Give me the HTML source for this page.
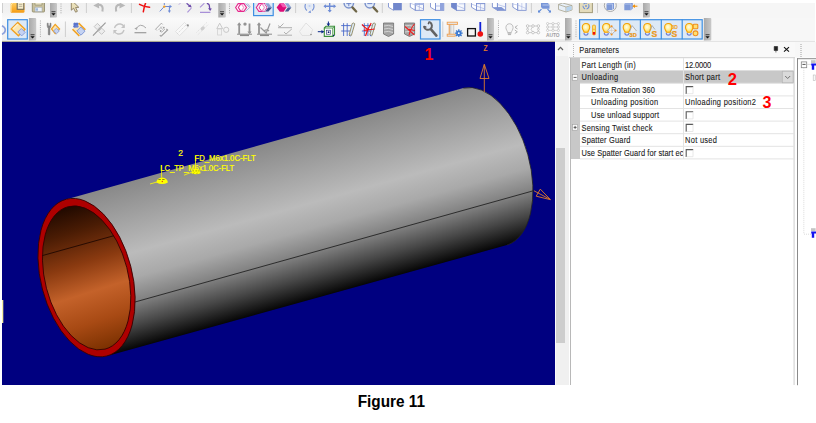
<!DOCTYPE html>
<html><head><meta charset="utf-8">
<style>
html,body{margin:0;padding:0;}
body{width:816px;height:423px;position:relative;overflow:hidden;background:#fff;font-family:"Liberation Sans",sans-serif;}
svg{position:absolute;left:0;top:0;}
text{font-family:"Liberation Sans",sans-serif;}
</style></head><body>
<svg width="816" height="423" viewBox="0 0 816 423">

<rect x="0" y="0" width="816" height="3" fill="#ffffff"/>
<defs><linearGradient id="rb1" x1="0" y1="0" x2="0" y2="1"><stop offset="0" stop-color="#f0f0f0"/><stop offset="0.6" stop-color="#f2f2f2"/><stop offset="1" stop-color="#f8f8f8"/></linearGradient><linearGradient id="rb2" x1="0" y1="0" x2="0" y2="1"><stop offset="0" stop-color="#fafafa"/><stop offset="1" stop-color="#efefef"/></linearGradient></defs>
<rect x="0" y="3" width="816" height="15" fill="#f6f6f6"/>
<rect x="2" y="3" width="648" height="15" fill="url(#rb1)"/>
<rect x="0" y="18" width="816" height="23" fill="#f7f7f7"/>
<rect x="2" y="18" width="709" height="22" fill="url(#rb2)"/>
<rect x="0" y="39.8" width="816" height="1" fill="#fbfbfb"/>
<rect x="0" y="40.8" width="555" height="1.2" fill="#aaa692"/>
<rect x="555" y="40.8" width="261" height="1.2" fill="#e4e4e4"/>
<rect x="0" y="0" width="2" height="42" fill="#ffffff"/>
<rect x="815" y="0" width="1" height="42" fill="#ffffff"/>
<defs>
<linearGradient id="grip" x1="0" y1="0" x2="1" y2="0"><stop offset="0" stop-color="#a9a9a9"/><stop offset="1" stop-color="#c9c9c9"/></linearGradient>
<linearGradient id="fold" x1="0" y1="0" x2="0" y2="1"><stop offset="0" stop-color="#ffd36a"/><stop offset="1" stop-color="#f59a10"/></linearGradient>
<radialGradient id="bulbg" cx="0.45" cy="0.4" r="0.65"><stop offset="0" stop-color="#fffde8"/><stop offset="0.55" stop-color="#ffec90"/><stop offset="1" stop-color="#ffc830"/></radialGradient>
<clipPath id="r1"><rect x="0" y="3" width="816" height="15"/></clipPath>
</defs>
<g clip-path="url(#r1)">
<rect x="2.0" y="3" width="1" height="10" fill="#cfcfcf"/>
<path d="M10.5 4 L12 2 H24.5 V11.5 Q24.5 12.8 23.2 12.8 H11.8 Q10.5 12.8 10.5 11.5 Z" fill="url(#fold)"/>
<rect x="17.2" y="1" width="6.6" height="8.3" fill="#f8eecb" stroke="#6f6a58" stroke-width="1.1"/>
<path d="M18.8 4.3 H22.3 M18.8 6.3 H22.3" stroke="#9a927a" stroke-width="0.7"/>
<path d="M11 12 V5 L12.5 3.2" fill="none" stroke="#ffe9b0" stroke-width="1"/>
<rect x="32.3" y="1" width="12.2" height="11" rx="0.8" fill="#c8c09c" stroke="#8c8668" stroke-width="0.8"/>
<rect x="35" y="7.2" width="7" height="4.3" fill="#eef3f8" stroke="#9aa0a8" stroke-width="0.5"/>
<rect x="35.6" y="8.3" width="2.4" height="2.4" fill="#9db8dc"/>
<path d="M35 1 V5 H42 V1" fill="#e8e2c8" stroke="#8c8668" stroke-width="0.6"/>
<path d="M50 3 H56 Q57 3 57 4 V16.5 Q57 17.5 56 17.5 H50 Z" fill="url(#grip)"/>
<rect x="51.5" y="11.3" width="4" height="0.9" fill="#303030"/>
<path d="M51.3 13.2 h4.4 l-2.2 2.4 z" fill="#111"/>
<rect x="60.5" y="3.5" width="1" height="1" fill="#a8a8a8"/>
<rect x="60.5" y="5.7" width="1" height="1" fill="#a8a8a8"/>
<rect x="60.5" y="7.9" width="1" height="1" fill="#a8a8a8"/>
<rect x="60.5" y="10.100000000000001" width="1" height="1" fill="#a8a8a8"/>
<rect x="60.5" y="12.3" width="1" height="1" fill="#a8a8a8"/>
<path d="M71.3 0 V10.2 L73.6 8.2 L75.6 12.2 L77.4 11.3 L75.6 7.5 L78.8 7.3 Z" fill="#e9dfb8" stroke="#7d7050" stroke-width="0.8"/>
<rect x="85.9" y="3" width="1" height="10" fill="#cfcfcf"/>
<path d="M102.4 11.6 Q104 4.6 98.2 4.6" fill="none" stroke="#b8b8b8" stroke-width="2.1"/><path d="M93.3 5.6 L98.8 2.6 L99.2 8.4 Z" fill="#b8b8b8"/>
<path d="M116.2 11.6 Q114.6 4.6 120.4 4.6" fill="none" stroke="#b8b8b8" stroke-width="2.1"/><path d="M125.3 5.6 L119.8 2.6 L119.4 8.4 Z" fill="#b8b8b8"/>
<rect x="130.9" y="3" width="1" height="10" fill="#cfcfcf"/>
<path d="M139.5 4.3 Q144 6.8 149.6 7.2 M145.6 3 Q144 7 143.3 11.8" fill="none" stroke="#ee1111" stroke-width="1.5" stroke-linecap="round"/>
<path d="M159.8 11.4 L164 6.8 M164.3 6.5 H171 M169.4 6.8 V12.3 M164.3 3 V5" fill="none" stroke="#6d8ad6" stroke-width="1"/>
<path d="M172 6.5 L169.6 4.8 V8.2 Z M169.4 12.8 L167.8 10.5 H171 Z" fill="#6d8ad6"/><circle cx="164.3" cy="6.6" r="1.2" fill="#f4a020"/>
<path d="M179 4.5 L180.2 3.3" stroke="#a890d8" stroke-width="1"/>
<path d="M186.6 3.2 L190.6 6.8" stroke="#7050b0" stroke-width="1.2"/><path d="M191.8 7.4 L187.8 6.6 L190.3 4.4 Z" fill="#6a48a8"/>
<path d="M191.4 8 L187.4 12.4" stroke="#a890d8" stroke-width="1.1"/>
<path d="M200 7.3 L204.4 3.2 M200 12.4 H210.4" fill="none" stroke="#a890d8" stroke-width="1.1"/>
<path d="M206.8 3.4 Q208.6 3.6 209.2 5 L209.8 9" fill="none" stroke="#6a48a8" stroke-width="1.3"/><path d="M210.2 11 L208 8.2 L211.8 8.4 Z" fill="#6a48a8"/>
<path d="M218.3 3 H224.8 Q225.8 3 225.8 4 V16.5 Q225.8 17.5 224.8 17.5 H218.3 Z" fill="url(#grip)"/>
<rect x="220.05" y="11.3" width="4" height="0.9" fill="#303030"/>
<path d="M219.85000000000002 13.2 h4.4 l-2.2 2.4 z" fill="#111"/>
<rect x="229.0" y="3.5" width="1" height="1" fill="#a8a8a8"/>
<rect x="229.0" y="5.7" width="1" height="1" fill="#a8a8a8"/>
<rect x="229.0" y="7.9" width="1" height="1" fill="#a8a8a8"/>
<rect x="229.0" y="10.100000000000001" width="1" height="1" fill="#a8a8a8"/>
<rect x="229.0" y="12.3" width="1" height="1" fill="#a8a8a8"/>
<path d="M235.6 7.5 L238.2 3.6 L241.2 3.6 L243.8 7.5 L241.2 11.4 L238.2 11.4 Z" fill="#ffffff" stroke="#e5288c" stroke-width="1.1"/>
<path d="M238.3 7.5 L240.9 3.6 L243.9 3.6 L246.5 7.5 L243.9 11.4 L240.9 11.4 Z" fill="#ffffff" fill-opacity="0.55" stroke="#e5288c" stroke-width="1.1"/>
<path d="M245.4 3.5 L249.6 7.5 L245.4 11.5 M247.3 3.5 L250.6 7.2" fill="none" stroke="#8ea4d8" stroke-width="0.8"/>
<rect x="253.6" y="0" width="19.6" height="15.6" fill="#dde9f6" stroke="#3d8fe3" stroke-width="1.2"/>
<path d="M256.3 7.5 L258.9 3.6 L261.9 3.6 L264.5 7.5 L261.9 11.4 L258.9 11.4 Z" fill="#ffffff" fill-opacity="0.8" stroke="#e5288c" stroke-width="1.1"/>
<path d="M259 7.5 L261.6 3.6 L264.6 3.6 L267.2 7.5 L264.6 11.4 L261.6 11.4 Z" fill="#ffffff" fill-opacity="0.5" stroke="#e5288c" stroke-width="1.1" stroke-dasharray="1.2 0.6"/>
<path d="M265.2 3.3 L268.5 3.3 L272 7.4 L268.2 7.4 Z" fill="#8ea4d6"/><path d="M268.2 7.4 L272 7.4 L268.5 11.6 L265.2 11.6 Z" fill="#3e4f88"/>
<path d="M276.6 7.5 L279.8 3.3 L283.8 3.3 L286.6 7.2 L283.6 11.7 L279.8 11.7 Z" fill="#dc0c78"/>
<path d="M279.8 3.3 L283.8 3.3 L286.6 7.2 L282.8 7.2 Z" fill="#f45cb4"/>
<path d="M284.8 3.3 L288.3 3.3 L291.4 7.4 L287.8 7.4 Z" fill="#90a6d8"/><path d="M287.8 7.4 L291.4 7.4 L288.3 11.6 L284.8 11.6 Z" fill="#46588e"/>
<rect x="295.1" y="3" width="1" height="10" fill="#cfcfcf"/>
<path d="M305.5 4 Q304 8 307 10.5 M313.5 4 Q315 8 312 10.5" fill="none" stroke="#7a96d8" stroke-width="1.2"/><circle cx="309.5" cy="6" r="1" fill="#7a96d8"/><path d="M308 12.5 L310.5 10.2 L311 13 Z" fill="#7a96d8"/><circle cx="309.5" cy="6.5" r="3" fill="#dbe6f8" fill-opacity="0.7"/>
<path d="M324.5 6.2 H335 M329.7 3 V11.5" stroke="#6f8dd6" stroke-width="1.4"/><path d="M323.4 6.2 L326 4.2 V8.2 Z M336.2 6.2 L333.6 4.2 V8.2 Z M329.7 12.5 L327.6 10 H331.8 Z" fill="#6f8dd6"/>
<circle cx="348.8" cy="3.2" r="4.7" fill="#e2ebf9" stroke="#7d93cb" stroke-width="1.5"/>
<path d="M352.4 7.4 L356.2 11.5" stroke="#6e6648" stroke-width="2.3" stroke-linecap="round"/>
<path d="M346.3 3.6 H351.3" stroke="#6f86c8" stroke-width="1"/>
<path d="M348.8 1 V6.2" stroke="#6f86c8" stroke-width="1"/>
<circle cx="369.8" cy="3.2" r="4.7" fill="#e2ebf9" stroke="#7d93cb" stroke-width="1.5"/>
<path d="M373.4 7.4 L377.2 11.5" stroke="#6e6648" stroke-width="2.3" stroke-linecap="round"/>
<path d="M367.3 3.6 H372.3" stroke="#6f86c8" stroke-width="1"/>
<rect x="381.8" y="3" width="1" height="10" fill="#cfcfcf"/>
<g transform="translate(388,0)">
<path d="M0.5 0 V7.2 L5.5 10.3 V0 Z" fill="#ffffff" stroke="#7187cc" stroke-width="0.8"/>
<rect x="5.5" y="0" width="8.3" height="10.3" fill="#7187cc"/>
</g>
<g transform="translate(409.8,0)">
<path d="M0.5 0 V7.2 L5.5 10.3 V0 Z" fill="#ffffff" stroke="#7187cc" stroke-width="0.8"/>
<rect x="5.5" y="0" width="8.3" height="10.3" fill="#f6f8fd" stroke="#7187cc" stroke-width="0.8"/>
<rect x="5.5" y="3" width="8.3" height="2" fill="#a9b8e4"/><path d="M5.5 5 L13.8 9 M9.5 3 V10" stroke="#9aaade" stroke-width="0.6"/><path d="M0.5 3.2 L5.5 5" stroke="#9aaade" stroke-width="0.6"/>
</g>
<g transform="translate(430,0)">
<path d="M0.5 0 V7.2 L5.5 10.3 V0 Z" fill="#ffffff" stroke="#7187cc" stroke-width="0.8"/>
<rect x="5.5" y="0" width="8.3" height="10.3" fill="#f6f8fd" stroke="#7187cc" stroke-width="0.8"/>
<rect x="10" y="0" width="3.8" height="10.3" fill="#90a3dc"/><path d="M5.5 6 H10" stroke="#9aaade" stroke-width="0.7"/>
</g>
<g transform="translate(451,0)">
<path d="M0.5 0 V7.2 L5.5 10.3 V0 Z" fill="#7187cc" stroke="#7187cc" stroke-width="0.8"/>
<rect x="5.5" y="0" width="8.3" height="10.3" fill="#f6f8fd" stroke="#7187cc" stroke-width="0.8"/>
<path d="M5.5 5.5 L13.8 8.8 M8 3.8 H13.8" stroke="#9aaade" stroke-width="0.6"/>
</g>
<g transform="translate(471,0)">
<path d="M0.5 0 V7.2 L5.5 10.3 V0 Z" fill="#ffffff" stroke="#7187cc" stroke-width="0.8"/>
<rect x="5.5" y="0" width="8.3" height="10.3" fill="#f6f8fd" stroke="#7187cc" stroke-width="0.8"/>
<path d="M5.5 3.6 H13.8" stroke="#7187cc" stroke-width="0.9"/><path d="M5.5 6 L13.8 9 M9.5 3.6 V10.3 M0.5 4 L5.5 6" stroke="#9aaade" stroke-width="0.6"/>
</g>
<g transform="translate(491.9,0)">
<path d="M0.5 0 V7.2 L5.5 10.3 V0 Z" fill="#ffffff" stroke="#7187cc" stroke-width="0.8"/>
<rect x="5.5" y="0" width="8.3" height="10.3" fill="#f6f8fd" stroke="#7187cc" stroke-width="0.8"/>
<path d="M0.5 7.2 L5.5 10.3 H13.8 L9.5 7 Z" fill="#8095d4"/><path d="M5.5 4.5 L13.8 7" stroke="#9aaade" stroke-width="0.6"/>
</g>
<g transform="translate(512.3,0)">
<path d="M0.5 0 V7.2 L5.5 10.3 V0 Z" fill="#ffffff" stroke="#7187cc" stroke-width="0.8"/>
<rect x="5.5" y="0" width="8.3" height="10.3" fill="#f6f8fd" stroke="#7187cc" stroke-width="0.8"/>
<path d="M5.5 5 L13.8 8.5 M9.5 3 V10.3 M0.5 4 L5.5 5" stroke="#a8b6e2" stroke-width="0.6"/>
</g>
<rect x="530.9" y="3" width="1" height="10" fill="#cfcfcf"/>
<path d="M541 3 H548 L549.5 5 V8.8 H542.5 L541 7 Z" fill="#7896d8"/><path d="M542.5 5 H549.5" stroke="#c8d6f2" stroke-width="0.8"/>
<path d="M541.5 9.2 L538.6 12 M547.5 9.2 L550.4 12" stroke="#5c88d8" stroke-width="1.1"/><path d="M538 12.6 L538.2 10 L540.6 12.4 Z M551 12.6 L550.8 10 L548.4 12.4 Z" fill="#5c88d8"/>
<path d="M558.5 4.5 L562.5 3 L572 5.5 L572 10 L566 12 L558.5 9.5 Z" fill="#e8f0f8" stroke="#a8a490" stroke-width="0.8"/><path d="M558.5 4.5 L566 7 L572 5.5 M566 7 V12" fill="none" stroke="#a8a490" stroke-width="0.8"/><path d="M566.5 7.3 L571.5 5.9 V9.8 L566.5 11.5 Z" fill="#b8d4ee"/>
<rect x="579.4" y="1" width="13" height="11.6" fill="#e4dcbc" stroke="#a49c7c" stroke-width="1"/><circle cx="586" cy="6" r="3" fill="none" stroke="#6f90d8" stroke-width="1.1" stroke-dasharray="4 1.5"/><circle cx="586" cy="6" r="0.9" fill="#6f90d8"/>
<rect x="597.0" y="3" width="1" height="10" fill="#cfcfcf"/>
<circle cx="610.3" cy="5.5" r="6" fill="none" stroke="#a0a0a0" stroke-width="0.9"/><path d="M606.5 4 L608 2.5 H614 V8.5 L612.5 10 H606.5 Z" fill="#7f9ad8"/><path d="M606.5 4 H612.5 V10" fill="none" stroke="#c8d6f2" stroke-width="0.7"/>
<path d="M624.3 4 L626 2.3 H632.8 V8.5 L631 10.2 H624.3 Z" fill="#7f9ad8"/><path d="M624.3 4 H631 V10.2" fill="none" stroke="#c8d6f2" stroke-width="0.7"/><path d="M633 6.2 H637.4" stroke="#f0900a" stroke-width="1.1"/><path d="M632.3 6.2 L635 4.3 V8.1 Z" fill="#f0900a"/>
<path d="M643 3 H649 Q650 3 650 4 V16.5 Q650 17.5 649 17.5 H643 Z" fill="url(#grip)"/>
<rect x="644.5" y="11.3" width="4" height="0.9" fill="#303030"/>
<path d="M644.3 13.2 h4.4 l-2.2 2.4 z" fill="#111"/>
</g>
<path d="M2 25.8 Q5.3 27.5 5.3 30 Q5.3 32.8 2 34.4" fill="none" stroke="#8ca0dc" stroke-width="1.6"/>
<rect x="7.699999999999999" y="19.700000000000003" width="19.599999999999998" height="19.3" fill="#dde9f6" stroke="#3d8fe3" stroke-width="1.2"/>
<path d="M11.2 29 L17.8 22.4 L25 29.2 L18.4 35.8 Z" fill="#fbe6b0" stroke="#f0a020" stroke-width="1.4"/>
<path d="M12.8 29 L17.8 24" stroke="#fff2d0" stroke-width="1.2"/>
<path d="M17.8 32 L21.3 28.5 L25.2 32.4 L21.7 35.9 Z" fill="#c4d2f2" stroke="#8199d8" stroke-width="0.9"/>
<path d="M28.9 18.1 H35.2 Q36.2 18.1 36.2 19.1 V39.5 Q36.2 40.5 35.2 40.5 H28.9 Z" fill="url(#grip)"/>
<rect x="30.549999999999997" y="34.3" width="4" height="0.9" fill="#303030"/>
<path d="M30.349999999999998 36.2 h4.4 l-2.2 2.4 z" fill="#111"/>
<rect x="39.9" y="20.5" width="1" height="1" fill="#a8a8a8"/>
<rect x="39.9" y="22.7" width="1" height="1" fill="#a8a8a8"/>
<rect x="39.9" y="24.9" width="1" height="1" fill="#a8a8a8"/>
<rect x="39.9" y="27.099999999999998" width="1" height="1" fill="#a8a8a8"/>
<rect x="39.9" y="29.299999999999997" width="1" height="1" fill="#a8a8a8"/>
<rect x="39.9" y="31.499999999999996" width="1" height="1" fill="#a8a8a8"/>
<rect x="39.9" y="33.699999999999996" width="1" height="1" fill="#a8a8a8"/>
<rect x="39.9" y="35.9" width="1" height="1" fill="#a8a8a8"/>
<path d="M47.2 23.2 V25.8 Q47.2 27.6 48.3 28.2 V34.6 Q49.1 35.6 49.9 34.6 V28.2 Q51 27.6 51 25.8 V23.2 L50 23.2 V25.6 Q49.1 26.4 48.2 25.6 V23.2 Z" fill="#868686" stroke="#707070" stroke-width="0.5"/>
<path d="M51.5 29 L55.2 24.4 L59.6 29 L55.2 33.6 Z" fill="#fbe6b0" stroke="#f0a020" stroke-width="1.2"/><path d="M53.5 31 L56.4 28.3 L59.3 31 L56.4 33.8 Z" fill="#c4d2f2" stroke="#8199d8" stroke-width="0.8"/>
<rect x="64.9" y="21.5" width="1" height="15.5" fill="#cfcfcf"/>
<path d="M72.5 29.2 L78.6 23 L85.4 29.8 L79.3 36 Z" fill="#fbe8bc"/>
<path d="M72.5 29.2 L79.3 36 M78.6 23 L85.4 29.8" stroke="#f0a020" stroke-width="1.5"/>
<path d="M76.8 31 L80.8 27 L85 31.2 L81 35.2 Z" fill="#c4d2f2" stroke="#7f98d8" stroke-width="1"/>
<circle cx="74.8" cy="24" r="1.5" fill="#5a74cc"/><circle cx="77" cy="24" r="1.5" fill="#5a74cc"/><circle cx="74.8" cy="26.2" r="1.5" fill="#5a74cc"/><circle cx="77" cy="26.2" r="1.5" fill="#6a84d4"/>
<path d="M93 35.6 L105.6 22.6" stroke="#9a9a9a" stroke-width="1.2"/><path d="M94.2 26.6 L97.4 23.4 L100.4 26.4 L97.2 29.6 Z M98.6 31.4 L101.8 28.2 L104.8 31.2 L101.6 34.4 Z" fill="#ededed" stroke="#c0c0c0" stroke-width="0.9"/>
<path d="M114.5 28 Q116 23.5 120.5 24 Q123 24.5 124 26.5 M124 30 Q122.5 34.5 118 34 Q115.5 33.5 114.5 31.5" fill="none" stroke="#c4c4c4" stroke-width="1.4"/><path d="M124.8 24 V28 H121 Z M113.4 34 V30 H117.2 Z" fill="#c4c4c4"/>
<path d="M136 29 Q140 22 146 28" fill="none" stroke="#a8a8a8" stroke-width="1"/><path d="M134.3 28.5 L137.5 27 L137 30 Z" fill="#a8a8a8"/><path d="M134.5 32.7 H146.3" stroke="#9a9a9a" stroke-width="1.2"/>
<path d="M155.6 29.2 L156.8 30.4 M155.6 29.2 L161.4 23.2 L162.6 24.4" fill="none" stroke="#a8a8a8" stroke-width="1"/>
<path d="M161 36.4 L159.8 35.2 M161 36.4 L167.6 30 L166.4 28.8" fill="none" stroke="#9c9c9c" stroke-width="1.1"/>
<path d="M158.5 30 L162 26.5 M161.5 32.5 L165 29 M160.3 27 L163.5 30.2" fill="none" stroke="#b4b4b4" stroke-width="0.9"/><circle cx="160.7" cy="31" r="0.9" fill="#a0a0a0"/><circle cx="163.8" cy="27.7" r="0.9" fill="#a0a0a0"/>
<path d="M175.5 31.5 L184.5 22.5 L188.6 26.6 L179.6 35.6 Z" fill="#f8f8f8" stroke="#dadada" stroke-width="0.7"/><path d="M177.5 33.5 L186.5 24.5" stroke="#c8c8c8" stroke-width="0.8" stroke-dasharray="1 1.2"/><circle cx="187.8" cy="25.4" r="1.1" fill="#8e8e8e"/>
<path d="M196.5 32.5 L207.5 21.8 M197.8 34.8 L208.8 24" fill="none" stroke="#d8d8d8" stroke-width="0.8" stroke-dasharray="1.2 1"/><ellipse cx="202.7" cy="28.4" rx="2.4" ry="1.7" transform="rotate(-45 202.7 28.4)" fill="#cfcfcf"/>
<path d="M216.8 28.6 L219.7 23.2 L222.6 28.6 Z" fill="none" stroke="#c4c4c4" stroke-width="0.9"/><rect x="217.6" y="29" width="4" height="6" fill="#f2f2f2" stroke="#d2d2d2" stroke-width="0.8"/><circle cx="226.2" cy="29.8" r="2.6" fill="none" stroke="#c4c4c4" stroke-width="0.9"/>
<path d="M239.2 24.5 V34.5 M249.5 23.5 V33" stroke="#949494" stroke-width="1.8"/><path d="M239.2 22.3 L237 25.2 H241.4 Z M249.5 34.3 L247.4 31.6 H251.6 Z" fill="#949494"/><circle cx="245" cy="24.1" r="1.7" fill="#949494"/><rect x="237" y="33.6" width="15" height="1.3" fill="#a4a4a4"/><rect x="240" y="34.6" width="9" height="1.5" fill="#8a8a8a"/>
<path d="M259 24.5 V34.5" stroke="#949494" stroke-width="1.8"/><path d="M259 22.3 L256.8 25.2 H261.2 Z" fill="#949494"/><rect x="257" y="33.6" width="15" height="1.3" fill="#a4a4a4"/><rect x="260" y="34.6" width="9" height="1.5" fill="#8a8a8a"/><path d="M260.5 27.5 L266.5 33.2 M270 23.5 L266 33.5 M264.5 30.5 Q267 29 269 31" fill="none" stroke="#9a9a9a" stroke-width="1.2"/>
<path d="M278 25.5 L280 27 L283.5 23.5 M284 32 L286 34 L291.8 29 M278 27.7 H292 M277.5 35.2 H292" fill="none" stroke="#a8a8a8" stroke-width="0.9"/>
<path d="M299.5 31.5 L306 23 L312.6 29.5 L310.5 35.5 L302 35.5 Z" fill="none" stroke="#dcdcdc" stroke-width="0.8"/><circle cx="311" cy="34.5" r="0.8" fill="#8a8a8a"/>
<path d="M324.3 28 L326 26.3 H334.5 V34.7 L332.8 36.4 H324.3 Z" fill="#ffffff" stroke="#3a8e3a" stroke-width="1.1"/>
<path d="M324.3 28 H332.8 V36.4 M332.8 28 L334.5 26.3" fill="none" stroke="#3a8e3a" stroke-width="0.9"/>
<rect x="326.6" y="30.2" width="4" height="4" fill="#fff" stroke="#1a2a6a" stroke-width="0.6"/><circle cx="328.6" cy="32.2" r="0.9" fill="#0c1e70"/><circle cx="333.6" cy="35.6" r="0.8" fill="#0c1e70"/>
<path d="M328.4 21.5 V25.6 M317.8 31.7 H323.6" stroke="#0c2a88" stroke-width="1"/><path d="M328.4 26.2 L326.6 23.4 H330.2 Z M324.3 31.7 L321.4 30 V33.4 Z" fill="#0c2a88"/>
<path d="M343.6 23.2 V36 M347.2 23.2 V36 M341.2 25.6 H350.8 M341.2 31 H350.8" stroke="#4868c8" stroke-width="0.9"/>
<path d="M349.2 34.8 L352.2 23.6 Q353.6 22.3 354.8 23.8 L351.4 35.4 Z" fill="#dcebf8" stroke="#8c8660" stroke-width="0.9"/>
<path d="M349.3 35 L350.3 36.3" stroke="#4868c8" stroke-width="1"/>
<path d="M364.3 23.2 V36 M367.9 23.2 V36 M361.9 25.6 H371.5 M361.9 31 H371.5" stroke="#4868c8" stroke-width="0.9"/>
<path d="M369.9 34.8 L372.9 23.6 Q374.3 22.3 375.5 23.8 L372.09999999999997 35.4 Z" fill="#dcebf8" stroke="#8c8660" stroke-width="0.9"/>
<path d="M370.0 35 L371.0 36.3" stroke="#4868c8" stroke-width="1"/>
<path d="M362.0 24.3 Q364.7 27.5 367.2 29 M371.2 23.2 Q367.7 28.5 365.5 36 M363.7 30.4 Q368.7 29.6 374.7 29" fill="none" stroke="#f01818" stroke-width="1.2"/>
<path d="M383.5 23 H393.6 V34 L388.5 36.5 L383.5 34 Z" fill="#a4a4a4" stroke="#707070" stroke-width="0.8"/>
<path d="M384 26 Q388.5 24.5 393 26.5 M384 29 Q388.5 27.5 393 29.5 M384 32 Q388.5 30.5 393 32.5" fill="none" stroke="#d8d8d8" stroke-width="0.9"/>
<path d="M404.5 23 H414.6 V34 L409.5 36.5 L404.5 34 Z" fill="#a4a4a4" stroke="#707070" stroke-width="0.8"/>
<path d="M405 26 Q409.5 24.5 414 26.5 M405 29 Q409.5 27.5 414 29.5 M405 32 Q409.5 30.5 414 32.5" fill="none" stroke="#d8d8d8" stroke-width="0.9"/>
<path d="M405 26.5 Q410 31 414.5 35 M414.5 24 Q410 29 409 35.5 M408 29 L415 30.5" fill="none" stroke="#ee2020" stroke-width="1.1"/>
<rect x="420.5" y="19.700000000000003" width="19.500000000000046" height="19.3" fill="#dde9f6" stroke="#3d8fe3" stroke-width="1.2"/>
<path d="M429.6 22.2 A4 4 0 1 1 424 26.6" fill="none" stroke="#626262" stroke-width="2"/>
<path d="M429.2 21.9 L428.4 23.6 M424 26.6 L425.8 27" stroke="#5a5a5a" stroke-width="1.5" stroke-linecap="round"/>
<path d="M431.2 29.6 L436.4 35.6" stroke="#626262" stroke-width="2.6" stroke-linecap="round"/>
<rect x="442.3" y="21.5" width="1" height="15.5" fill="#cfcfcf"/>
<rect x="449.2" y="23.6" width="4.6" height="11" fill="#cfcfcf"/><rect x="451.4" y="23.6" width="2.4" height="11" fill="#ececec"/>
<rect x="447.2" y="22.2" width="10.2" height="2.2" fill="#e6e6e6" stroke="#f0a050" stroke-width="0.9"/>
<rect x="447.2" y="34.2" width="8" height="2" fill="#e6e6e6" stroke="#f0a050" stroke-width="0.9"/>
<path d="M449.2 24.4 V34.2" stroke="#f0a050" stroke-width="1"/><path d="M453.8 24.4 V34.2" stroke="#b8b8b8" stroke-width="0.6"/>
<circle cx="458.8" cy="33.2" r="2.7" fill="#3a78d0"/><path d="M461.00 33.20 L462.70 33.20 M460.36 34.76 L461.56 35.96 M458.80 35.40 L458.80 37.10 M457.24 34.76 L456.04 35.96 M456.60 33.20 L454.90 33.20 M457.24 31.64 L456.04 30.44 M458.80 31.00 L458.80 29.30 M460.36 31.64 L461.56 30.44" stroke="#3a78d0" stroke-width="1.3"/><circle cx="458.8" cy="33.2" r="0.9" fill="#ffffff"/>
<rect x="467.6" y="28.6" width="7.8" height="7.4" fill="#f4f4f4" stroke="#111" stroke-width="1.3"/><rect x="479.4" y="22" width="1.8" height="10" fill="#1020d8"/><circle cx="480.3" cy="34" r="2.8" fill="#ee1111"/>
<path d="M487 18.1 H493 Q494 18.1 494 19.1 V39.5 Q494 40.5 493 40.5 H487 Z" fill="url(#grip)"/>
<rect x="488.5" y="34.3" width="4" height="0.9" fill="#303030"/>
<path d="M488.3 36.2 h4.4 l-2.2 2.4 z" fill="#111"/>
<rect x="498.0" y="20.5" width="1" height="1" fill="#a8a8a8"/>
<rect x="498.0" y="22.7" width="1" height="1" fill="#a8a8a8"/>
<rect x="498.0" y="24.9" width="1" height="1" fill="#a8a8a8"/>
<rect x="498.0" y="27.099999999999998" width="1" height="1" fill="#a8a8a8"/>
<rect x="498.0" y="29.299999999999997" width="1" height="1" fill="#a8a8a8"/>
<rect x="498.0" y="31.499999999999996" width="1" height="1" fill="#a8a8a8"/>
<rect x="498.0" y="33.699999999999996" width="1" height="1" fill="#a8a8a8"/>
<rect x="498.0" y="35.9" width="1" height="1" fill="#a8a8a8"/>
<rect x="498" y="18.4" width="67" height="21.8" fill="#fafafa"/><rect x="498" y="39.6" width="67.5" height="0.8" fill="#d8d8d8"/>
<rect x="498.0" y="20.5" width="1" height="1" fill="#a8a8a8"/>
<rect x="498.0" y="22.7" width="1" height="1" fill="#a8a8a8"/>
<rect x="498.0" y="24.9" width="1" height="1" fill="#a8a8a8"/>
<rect x="498.0" y="27.099999999999998" width="1" height="1" fill="#a8a8a8"/>
<rect x="498.0" y="29.299999999999997" width="1" height="1" fill="#a8a8a8"/>
<rect x="498.0" y="31.499999999999996" width="1" height="1" fill="#a8a8a8"/>
<rect x="498.0" y="33.699999999999996" width="1" height="1" fill="#a8a8a8"/>
<rect x="498.0" y="35.9" width="1" height="1" fill="#a8a8a8"/>
<g transform="translate(509.5,29)">
<path d="M-3.6 -1.5 C-3.6 -6.5 3.6 -6.5 3.6 -1.5 C3.6 0.8 2 2 1.8 3.6 H-1.8 C-2 2 -3.6 0.8 -3.6 -1.5 Z" fill="#f6f6f6" stroke="#b8b8b8" stroke-width="0.9"/>
<path d="M-1.9 4.2 H1.9 M-1.6 5.6 H1.6" stroke="#b0b0b0" stroke-width="1"/>
</g>
<path d="M517.5 25.5 L515 27.3 L517.5 29 M514.8 30 L517.3 31.8 L514.8 33.5" fill="none" stroke="#b0b0b0" stroke-width="1"/>
<path d="M527.6 26 V32.6 M538.4 26 V32.6 M527.6 26 H538.4 M527.6 32.6 H538.4 M533 26 L531 29.3 L533 32.6" fill="none" stroke="#c0c0c0" stroke-width="0.8"/>
<circle cx="527.6" cy="26" r="1.3" fill="#fdfdfd" stroke="#b4b4b4" stroke-width="0.7"/>
<circle cx="527.6" cy="32.6" r="1.3" fill="#fdfdfd" stroke="#b4b4b4" stroke-width="0.7"/>
<circle cx="533" cy="26" r="1.3" fill="#fdfdfd" stroke="#b4b4b4" stroke-width="0.7"/>
<circle cx="533" cy="32.6" r="1.3" fill="#fdfdfd" stroke="#b4b4b4" stroke-width="0.7"/>
<circle cx="538.4" cy="26" r="1.3" fill="#fdfdfd" stroke="#b4b4b4" stroke-width="0.7"/>
<circle cx="538.4" cy="32.6" r="1.3" fill="#fdfdfd" stroke="#b4b4b4" stroke-width="0.7"/>
<circle cx="527.6" cy="29.3" r="1" fill="#fdfdfd" stroke="#b4b4b4" stroke-width="0.6"/><circle cx="538.4" cy="29.3" r="1" fill="#fdfdfd" stroke="#b4b4b4" stroke-width="0.6"/>
<path d="M547.6 23.6 V30.4 M553 23.6 V30.4 M558.4 23.6 V30.4 M547.6 23.6 H558.4 M547.6 27 H558.4 M547.6 30.4 H558.4" fill="none" stroke="#c8c8c8" stroke-width="0.7"/>
<circle cx="547.6" cy="23.6" r="1.1" fill="#fdfdfd" stroke="#b8b8b8" stroke-width="0.6"/>
<circle cx="547.6" cy="27" r="1.1" fill="#fdfdfd" stroke="#b8b8b8" stroke-width="0.6"/>
<circle cx="547.6" cy="30.4" r="1.1" fill="#fdfdfd" stroke="#b8b8b8" stroke-width="0.6"/>
<circle cx="553" cy="23.6" r="1.1" fill="#fdfdfd" stroke="#b8b8b8" stroke-width="0.6"/>
<circle cx="553" cy="27" r="1.1" fill="#fdfdfd" stroke="#b8b8b8" stroke-width="0.6"/>
<circle cx="553" cy="30.4" r="1.1" fill="#fdfdfd" stroke="#b8b8b8" stroke-width="0.6"/>
<circle cx="558.4" cy="23.6" r="1.1" fill="#fdfdfd" stroke="#b8b8b8" stroke-width="0.6"/>
<circle cx="558.4" cy="27" r="1.1" fill="#fdfdfd" stroke="#b8b8b8" stroke-width="0.6"/>
<circle cx="558.4" cy="30.4" r="1.1" fill="#fdfdfd" stroke="#b8b8b8" stroke-width="0.6"/>
<text x="546" y="36.8" font-size="5" font-weight="bold" fill="#a0a0a0" textLength="13.6" lengthAdjust="spacingAndGlyphs">AUTO</text>
<path d="M565 18.1 H570.8 Q571.8 18.1 571.8 19.1 V39.5 Q571.8 40.5 570.8 40.5 H565 Z" fill="url(#grip)"/>
<rect x="566.4" y="34.3" width="4" height="0.9" fill="#303030"/>
<path d="M566.1999999999999 36.2 h4.4 l-2.2 2.4 z" fill="#111"/>
<rect x="575.5" y="20.5" width="1" height="1" fill="#a8a8a8"/>
<rect x="575.5" y="22.7" width="1" height="1" fill="#a8a8a8"/>
<rect x="575.5" y="24.9" width="1" height="1" fill="#a8a8a8"/>
<rect x="575.5" y="27.099999999999998" width="1" height="1" fill="#a8a8a8"/>
<rect x="575.5" y="29.299999999999997" width="1" height="1" fill="#a8a8a8"/>
<rect x="575.5" y="31.499999999999996" width="1" height="1" fill="#a8a8a8"/>
<rect x="575.5" y="33.699999999999996" width="1" height="1" fill="#a8a8a8"/>
<rect x="575.5" y="35.9" width="1" height="1" fill="#a8a8a8"/>
<rect x="579.6" y="19.7" width="122.59999999999994" height="19.3" fill="#dde9f6" stroke="#3d8fe3" stroke-width="1.2"/>
<rect x="598.6999999999999" y="19.3" width="1.2" height="20" fill="#3d8fe3"/>
<rect x="619.3" y="19.3" width="1.2" height="20" fill="#3d8fe3"/>
<rect x="639.8" y="19.3" width="1.2" height="20" fill="#3d8fe3"/>
<rect x="660.6999999999999" y="19.3" width="1.2" height="20" fill="#3d8fe3"/>
<rect x="681.6" y="19.3" width="1.2" height="20" fill="#3d8fe3"/>
<g transform="translate(586.0,28.9)">
<path d="M-3.7 -1.6 C-3.7 -6.6 3.7 -6.6 3.7 -1.6 C3.7 0.8 2.1 1.9 1.9 3.4 H-1.9 C-2.1 1.9 -3.7 0.8 -3.7 -1.6 Z" fill="url(#bulbg)" stroke="#f5a000" stroke-width="1.1"/>
<path d="M-2 4 Q-2 6.2 0 6.2 Q2 6.2 2 4" fill="none" stroke="#6f7fd4" stroke-width="1.1"/>
</g>
<g transform="translate(606.3,28.9)">
<path d="M-3.7 -1.6 C-3.7 -6.6 3.7 -6.6 3.7 -1.6 C3.7 0.8 2.1 1.9 1.9 3.4 H-1.9 C-2.1 1.9 -3.7 0.8 -3.7 -1.6 Z" fill="url(#bulbg)" stroke="#f5a000" stroke-width="1.1"/>
<path d="M-2 4 Q-2 6.2 0 6.2 Q2 6.2 2 4" fill="none" stroke="#6f7fd4" stroke-width="1.1"/>
</g>
<g transform="translate(626.9,28.9)">
<path d="M-3.7 -1.6 C-3.7 -6.6 3.7 -6.6 3.7 -1.6 C3.7 0.8 2.1 1.9 1.9 3.4 H-1.9 C-2.1 1.9 -3.7 0.8 -3.7 -1.6 Z" fill="url(#bulbg)" stroke="#f5a000" stroke-width="1.1"/>
<path d="M-2 4 Q-2 6.2 0 6.2 Q2 6.2 2 4" fill="none" stroke="#6f7fd4" stroke-width="1.1"/>
</g>
<g transform="translate(647.4,28.9)">
<path d="M-3.7 -1.6 C-3.7 -6.6 3.7 -6.6 3.7 -1.6 C3.7 0.8 2.1 1.9 1.9 3.4 H-1.9 C-2.1 1.9 -3.7 0.8 -3.7 -1.6 Z" fill="url(#bulbg)" stroke="#f5a000" stroke-width="1.1"/>
<path d="M-2 4 Q-2 6.2 0 6.2 Q2 6.2 2 4" fill="none" stroke="#6f7fd4" stroke-width="1.1"/>
</g>
<g transform="translate(668.3,28.9)">
<path d="M-3.7 -1.6 C-3.7 -6.6 3.7 -6.6 3.7 -1.6 C3.7 0.8 2.1 1.9 1.9 3.4 H-1.9 C-2.1 1.9 -3.7 0.8 -3.7 -1.6 Z" fill="url(#bulbg)" stroke="#f5a000" stroke-width="1.1"/>
<path d="M-2 4 Q-2 6.2 0 6.2 Q2 6.2 2 4" fill="none" stroke="#6f7fd4" stroke-width="1.1"/>
</g>
<g transform="translate(689.2,28.9)">
<path d="M-3.7 -1.6 C-3.7 -6.6 3.7 -6.6 3.7 -1.6 C3.7 0.8 2.1 1.9 1.9 3.4 H-1.9 C-2.1 1.9 -3.7 0.8 -3.7 -1.6 Z" fill="url(#bulbg)" stroke="#f5a000" stroke-width="1.1"/>
<path d="M-2 4 Q-2 6.2 0 6.2 Q2 6.2 2 4" fill="none" stroke="#6f7fd4" stroke-width="1.1"/>
</g>
<rect x="592.6" y="25.2" width="2.8" height="9.6" rx="0.6" fill="#ffe680" stroke="#f0a000" stroke-width="0.8"/><rect x="592.9" y="32" width="2.2" height="2.6" fill="#f01010"/><path d="M593 29.3 H595" stroke="#f0a000" stroke-width="0.6"/>
<path d="M611.6 26.2 L615.6 30.4 L611.6 34.6 L607.6 30.4 Z" fill="#f0f0f0" stroke="#a8a8a8" stroke-width="0.8"/><path d="M611.6 26.2 V34.6 M607.6 30.4 H615.6" stroke="#c0c0c0" stroke-width="0.5"/>
<circle cx="611.6" cy="26.2" r="1" fill="#f09020"/>
<circle cx="615.6" cy="30.4" r="1" fill="#f09020"/>
<circle cx="611.6" cy="34.6" r="1" fill="#f09020"/>
<path d="M629.5 32 L632 25.5 L636.5 31" fill="#f0f0f0" stroke="#a0a0a0" stroke-width="0.8"/><text x="629.6" y="37.3" font-size="5.6" font-weight="bold" fill="#f0a020" stroke="#e08010" stroke-width="0.2">3D</text>
<path d="M649.5 30.5 L652 25.5 L655 29.5" fill="none" stroke="#a0a0a0" stroke-width="0.8"/><text x="651.6" y="37.4" font-size="8.6" font-weight="bold" fill="#f0a020" stroke="#e08010" stroke-width="0.2">S</text>
<text x="671.6" y="29.2" font-size="5" font-weight="bold" fill="#f0a020">3D</text><text x="671.6" y="37.4" font-size="8.6" font-weight="bold" fill="#f0a020" stroke="#e08010" stroke-width="0.2">S</text><path d="M670.8 30 V36" stroke="#a0a0a0" stroke-width="0.7" stroke-dasharray="1 1"/>
<rect x="693.2" y="24.2" width="4.6" height="4.6" rx="0.9" fill="#ffe070" stroke="#f09020" stroke-width="1.1"/><circle cx="695.5" cy="33.3" r="2.4" fill="#ffe070" stroke="#f09020" stroke-width="1.1"/>
<path d="M703.8 18.1 H710.3 Q711.3 18.1 711.3 19.1 V39.5 Q711.3 40.5 710.3 40.5 H703.8 Z" fill="url(#grip)"/>
<rect x="705.55" y="34.3" width="4" height="0.9" fill="#303030"/>
<path d="M705.3499999999999 36.2 h4.4 l-2.2 2.4 z" fill="#111"/>
<rect x="2" y="42" width="553" height="343" fill="#000080"/>
<rect x="2" y="300" width="1.3" height="23" fill="#f4eea0"/>
<svg x="2" y="42" width="553" height="343" viewBox="2 42 553 343" overflow="hidden">
<defs>
<linearGradient id="gb" gradientUnits="userSpaceOnUse" x1="65.2" y1="198.5" x2="108.8" y2="355.5">
<stop offset="0" stop-color="#888888"/>
<stop offset="0.43" stop-color="#bbbbbb"/>
<stop offset="0.58" stop-color="#a9a9a9"/>
<stop offset="0.72" stop-color="#828282"/>
<stop offset="0.86" stop-color="#474747"/>
<stop offset="1" stop-color="#060606"/>
</linearGradient>
<linearGradient id="gc" gradientUnits="userSpaceOnUse" x1="84" y1="203" x2="92" y2="352">
<stop offset="0" stop-color="#1e0800"/>
<stop offset="0.18" stop-color="#4a1c04"/>
<stop offset="0.4" stop-color="#8a3a10"/>
<stop offset="0.6" stop-color="#c4622a"/>
<stop offset="0.8" stop-color="#a84a14"/>
<stop offset="1" stop-color="#7a3000"/>
</linearGradient>
</defs>
<path d="M65.8 199.4 L463.3 88.1 A45.6 81.5 -15.5 0 1 506.9 245.1 L107.2 355.9 Z" fill="url(#gb)"/>
<path d="M463.3 88.1 A45.6 81.5 -15.5 0 1 506.9 245.1" fill="none" stroke="#222" stroke-width="0.8"/>
<line x1="135" y1="302" x2="534" y2="190.6" stroke="#222" stroke-width="0.9"/>
<ellipse cx="86.55" cy="277.6" rx="45.65" ry="80.94" transform="rotate(-14.48 86.55 277.6)" fill="#ae0000" stroke="#300" stroke-width="0.8"/>
<clipPath id="inn"><ellipse cx="86.55" cy="277.9" rx="41.5" ry="73.6" transform="rotate(-14.48 86.55 277.6)"/></clipPath><ellipse cx="86.55" cy="277.9" rx="41.5" ry="73.6" transform="rotate(-14.48 86.55 277.6)" fill="url(#gc)" stroke="#300" stroke-width="0.8"/>
<line x1="38" y1="256.8" x2="125" y2="232.6" stroke="#200800" stroke-width="0.9" clip-path="url(#inn)"/>
<g stroke="#e07a2a" stroke-width="0.9" fill="none"><line x1="484.3" y1="64.5" x2="484.3" y2="92"/><path d="M484.3 64.3 L480 78.5 L489 78.5 Z"/><line x1="534" y1="190.8" x2="550" y2="199.3"/><path d="M550.5 199.7 L540.3 189.1 L536.2 196.2 Z"/></g>
<text transform="translate(483.40,50.80) scale(0.74,1)" font-size="9.0" fill="#f28020" stroke="#f28020" stroke-width="0.18" style="stroke-width:0.15">Z</text>
<text x="424.4" y="60.4" font-size="16" font-weight="bold" fill="#ff0000">1</text>
<text transform="translate(178.30,156.20) scale(0.95,1)" font-size="9" fill="#ffff00" stroke="#ffff00" stroke-width="0.18" >2</text>
<text transform="translate(194.40,161.30) scale(0.945,1)" font-size="8.2" fill="#ffff00" stroke="#ffff00" stroke-width="0.18" style="stroke-width:0.22">FD_M6x1.0C-FLT</text>
<text transform="translate(160.20,170.80) scale(0.93,1)" font-size="8.2" fill="#ffff00" stroke="#ffff00" stroke-width="0.18" style="stroke-width:0.22">LC_TP_M6x1.0C-FLT</text>
<g stroke="#ffff00" stroke-width="0.8" fill="none"><line x1="161.6" y1="165" x2="161.6" y2="177.6"/><line x1="195.5" y1="156" x2="195.5" y2="169"/><line x1="150" y1="184" x2="157.5" y2="181.8"/><line x1="184" y1="175.2" x2="191.8" y2="172.2"/></g>
<path d="M156.4 182.6 Q156.8 177.6 162.1 177.4 Q167.4 177.6 167.9 182.6 Q162 185.6 156.4 182.6 Z" fill="#ffff00"/>
<path d="M158.4 179.5 H160.8 M162.2 179.5 H164.6" stroke="#60600a" stroke-width="0.7"/><circle cx="162.3" cy="181.6" r="0.75" fill="#e05010"/>
<path d="M191.3 173.2 Q191.8 169 196 168.8 Q200.2 169 200.7 173.2 Q196 175.2 191.3 173.2 Z" fill="#ffff00"/>
<path d="M192.6 170.9 H194 M195.4 170.9 H197.2 M198.2 170.9 H199.6 M193.5 173.6 L194.2 172.6 M196.8 173.8 L197.3 172.8" stroke="#70700a" stroke-width="0.6"/>
</svg>
<rect x="555" y="42" width="15" height="343" fill="#f0f0f0"/>
<rect x="555" y="42" width="1" height="343" fill="#fbfbfb"/>
<rect x="556" y="42" width="13" height="14" fill="#f6f6f6"/>
<rect x="556" y="148" width="9" height="195" fill="#cdcdcd"/>
<path d="M558 50 L560.5 47.3 L563 50" fill="none" stroke="#606060" stroke-width="1.2"/>
<rect x="569" y="42" width="228" height="343" fill="#ffffff"/>
<rect x="568" y="42" width="227" height="15.5" fill="#f9f9f9"/>
<rect x="573" y="44" width="1" height="1" fill="#b8b8b8"/>
<rect x="573" y="46" width="1" height="1" fill="#b8b8b8"/>
<rect x="573" y="48" width="1" height="1" fill="#b8b8b8"/>
<rect x="573" y="50" width="1" height="1" fill="#b8b8b8"/>
<rect x="573" y="52" width="1" height="1" fill="#b8b8b8"/>
<rect x="573" y="54" width="1" height="1" fill="#b8b8b8"/>
<rect x="573" y="56" width="1" height="1" fill="#b8b8b8"/>
<text transform="translate(579.30,52.60) scale(0.84,1)" font-size="8.9" letter-spacing="0.132" fill="#1a1a1a" stroke="#1a1a1a" stroke-width="0.1">Parameters</text>
<path d="M774.2 46.5 h3.4 v4 h-3.4z M775.9 50.5 v2" fill="#222" stroke="#222" stroke-width="0.6"/>
<path d="M784 47.2 L789 51.7 M789 47.2 L784 51.7" stroke="#111" stroke-width="1.1"/>
<rect x="569" y="57.2" width="226" height="1" fill="#cfcfcf"/>
<rect x="570" y="58" width="1" height="327" fill="#b8b8b8"/>
<rect x="793.5" y="58" width="1.2" height="327" fill="#d6d6d6"/>
<rect x="571" y="58" width="9" height="101" fill="#c8c8c8"/>
<rect x="580" y="70.20" width="214" height="1" fill="#e3e3e3"/>
<svg x="580" y="58.10" width="103" height="12.6" overflow="hidden"><text transform="translate(1.50,9.40) scale(0.84,1)" font-size="8.9" letter-spacing="0.214" fill="#1a1a1a" stroke="#1a1a1a" stroke-width="0.1">Part Length (in)</text></svg>
<text transform="translate(685.00,67.50) scale(0.84,1)" font-size="8.9" letter-spacing="-0.15" fill="#1a1a1a" stroke="#1a1a1a" stroke-width="0.1">12.0000</text>
<rect x="580" y="70.70" width="214" height="12.6" fill="#c8c8c8"/>
<rect x="580" y="82.80" width="214" height="1" fill="#e3e3e3"/>
<svg x="580" y="70.70" width="103" height="12.6" overflow="hidden"><text transform="translate(1.50,9.40) scale(0.84,1)" font-size="8.9" letter-spacing="0.446" fill="#1a1a1a" stroke="#1a1a1a" stroke-width="0.1">Unloading</text></svg>
<text transform="translate(685.00,80.10) scale(0.84,1)" font-size="8.9" letter-spacing="0.304" fill="#1a1a1a" stroke="#1a1a1a" stroke-width="0.1">Short part</text>
<rect x="580" y="95.40" width="214" height="1" fill="#e3e3e3"/>
<svg x="580" y="83.30" width="103" height="12.6" overflow="hidden"><text transform="translate(11.10,9.40) scale(0.84,1)" font-size="8.9" letter-spacing="0.133" fill="#1a1a1a" stroke="#1a1a1a" stroke-width="0.1">Extra Rotation 360</text></svg>
<path d="M686.2 93.90 V86.60 H693.2" fill="none" stroke="#5a5a5a" stroke-width="1.1"/><path d="M693 86.90 V93.70 H686.6" fill="none" stroke="#e2e2e2" stroke-width="0.8"/>
<rect x="580" y="108.00" width="214" height="1" fill="#e3e3e3"/>
<svg x="580" y="95.90" width="103" height="12.6" overflow="hidden"><text transform="translate(11.10,9.40) scale(0.84,1)" font-size="8.9" letter-spacing="0.399" fill="#1a1a1a" stroke="#1a1a1a" stroke-width="0.1">Unloading position</text></svg>
<text transform="translate(685.00,105.30) scale(0.84,1)" font-size="8.9" letter-spacing="0.357" fill="#1a1a1a" stroke="#1a1a1a" stroke-width="0.1">Unloading position2</text>
<rect x="580" y="120.60" width="214" height="1" fill="#e3e3e3"/>
<svg x="580" y="108.50" width="103" height="12.6" overflow="hidden"><text transform="translate(11.10,9.40) scale(0.84,1)" font-size="8.9" letter-spacing="0.224" fill="#1a1a1a" stroke="#1a1a1a" stroke-width="0.1">Use unload support</text></svg>
<path d="M686.2 119.10 V111.80 H693.2" fill="none" stroke="#5a5a5a" stroke-width="1.1"/><path d="M693 112.10 V118.90 H686.6" fill="none" stroke="#e2e2e2" stroke-width="0.8"/>
<rect x="580" y="133.20" width="214" height="1" fill="#e3e3e3"/>
<svg x="580" y="121.10" width="103" height="12.6" overflow="hidden"><text transform="translate(1.50,9.40) scale(0.84,1)" font-size="8.9" letter-spacing="0.231" fill="#1a1a1a" stroke="#1a1a1a" stroke-width="0.1">Sensing Twist check</text></svg>
<path d="M686.2 131.70 V124.40 H693.2" fill="none" stroke="#5a5a5a" stroke-width="1.1"/><path d="M693 124.70 V131.50 H686.6" fill="none" stroke="#e2e2e2" stroke-width="0.8"/>
<rect x="580" y="145.80" width="214" height="1" fill="#e3e3e3"/>
<svg x="580" y="133.70" width="103" height="12.6" overflow="hidden"><text transform="translate(1.50,9.40) scale(0.84,1)" font-size="8.9" letter-spacing="0.208" fill="#1a1a1a" stroke="#1a1a1a" stroke-width="0.1">Spatter Guard</text></svg>
<text transform="translate(685.00,143.10) scale(0.84,1)" font-size="8.9" letter-spacing="0.357" fill="#1a1a1a" stroke="#1a1a1a" stroke-width="0.1">Not used</text>
<rect x="580" y="158.40" width="214" height="1" fill="#e3e3e3"/>
<svg x="580" y="146.30" width="103" height="12.6" overflow="hidden"><text transform="translate(1.50,9.40) scale(0.84,1)" font-size="8.9" letter-spacing="0.1" fill="#1a1a1a" stroke="#1a1a1a" stroke-width="0.1">Use Spatter Guard for start ec</text></svg>
<path d="M686.2 156.90 V149.60 H693.2" fill="none" stroke="#5a5a5a" stroke-width="1.1"/><path d="M693 149.90 V156.70 H686.6" fill="none" stroke="#e2e2e2" stroke-width="0.8"/>
<rect x="683" y="58" width="1" height="100.8" fill="#e3e3e3"/>
<rect x="782.3" y="71.2" width="10.8" height="11.6" fill="#dadada" stroke="#b5b5b5" stroke-width="0.7"/>
<path d="M785.2 76 L787.7 78.5 L790.2 76" fill="none" stroke="#555" stroke-width="0.8"/>
<rect x="572.7" y="74.6" width="4.8" height="5.6" fill="#fafafa" stroke="#9a9a9a" stroke-width="0.5"/><line x1="573.6" y1="77.4" x2="576.6" y2="77.4" stroke="#3c3c3c" stroke-width="0.8"/>
<rect x="572.7" y="124.60" width="4.8" height="5.6" fill="#fafafa" stroke="#9a9a9a" stroke-width="0.5"/><path d="M573.6 127.40 h3 M575.1 125.90 v3" stroke="#3c3c3c" stroke-width="0.8"/>
<text x="727.8" y="85" font-size="16.6" font-weight="bold" fill="#ff0000">2</text>
<text x="762.6" y="107.8" font-size="16" font-weight="bold" fill="#ff0000">3</text>
<rect x="795" y="42" width="21" height="15.5" fill="#f7f7f7"/>
<rect x="800.5" y="44" width="1" height="1" fill="#a0a0a0"/>
<rect x="800.5" y="46" width="1" height="1" fill="#a0a0a0"/>
<rect x="800.5" y="48" width="1" height="1" fill="#a0a0a0"/>
<rect x="800.5" y="50" width="1" height="1" fill="#a0a0a0"/>
<rect x="800.5" y="52" width="1" height="1" fill="#a0a0a0"/>
<rect x="800.5" y="54" width="1" height="1" fill="#a0a0a0"/>
<rect x="800.5" y="56" width="1" height="1" fill="#a0a0a0"/>
<rect x="797" y="58.2" width="19" height="1" fill="#8a8a8a"/>
<rect x="797" y="58.2" width="1" height="327" fill="#8a8a8a"/>
<rect x="801.3" y="61.9" width="5.4" height="5.8" fill="#fff" stroke="#858585" stroke-width="0.8"/><line x1="802.4" y1="64.4" x2="805.6" y2="64.4" stroke="#2a2a2a" stroke-width="0.8"/>
<line x1="803.8" y1="68.2" x2="803.8" y2="234.2" stroke="#d2d2d2" stroke-width="0.8" stroke-dasharray="1 1"/>
<line x1="804" y1="234.2" x2="811" y2="234.2" stroke="#d2d2d2" stroke-width="0.8" stroke-dasharray="1 1"/>
<line x1="806.8" y1="64.4" x2="811" y2="64.4" stroke="#d2d2d2" stroke-width="0.8"/>
<rect x="811" y="60.2" width="4.6" height="3" fill="#c4c4c4"/>
<path d="M811.2 63.400000000000006 H816 V65.4 H814.2 V69.8 H811.8 V65.4 H811.2 Z" fill="#1414f0"/>
<rect x="811" y="228.2" width="4.6" height="3" fill="#c4c4c4"/>
<path d="M811.2 231.39999999999998 H816 V233.39999999999998 H814.2 V237.79999999999998 H811.8 V233.39999999999998 H811.2 Z" fill="#1414f0"/>
<rect x="813.2" y="75" width="2" height="5.5" fill="none" stroke="#b8b8b8" stroke-width="0.6"/>
<text transform="translate(357.70,406.90) scale(0.925,1)" font-size="16.6" fill="#000" stroke="#000" stroke-width="0.18" font-weight="bold" style="stroke-width:0.05">Figure 11</text>
</svg></body></html>
